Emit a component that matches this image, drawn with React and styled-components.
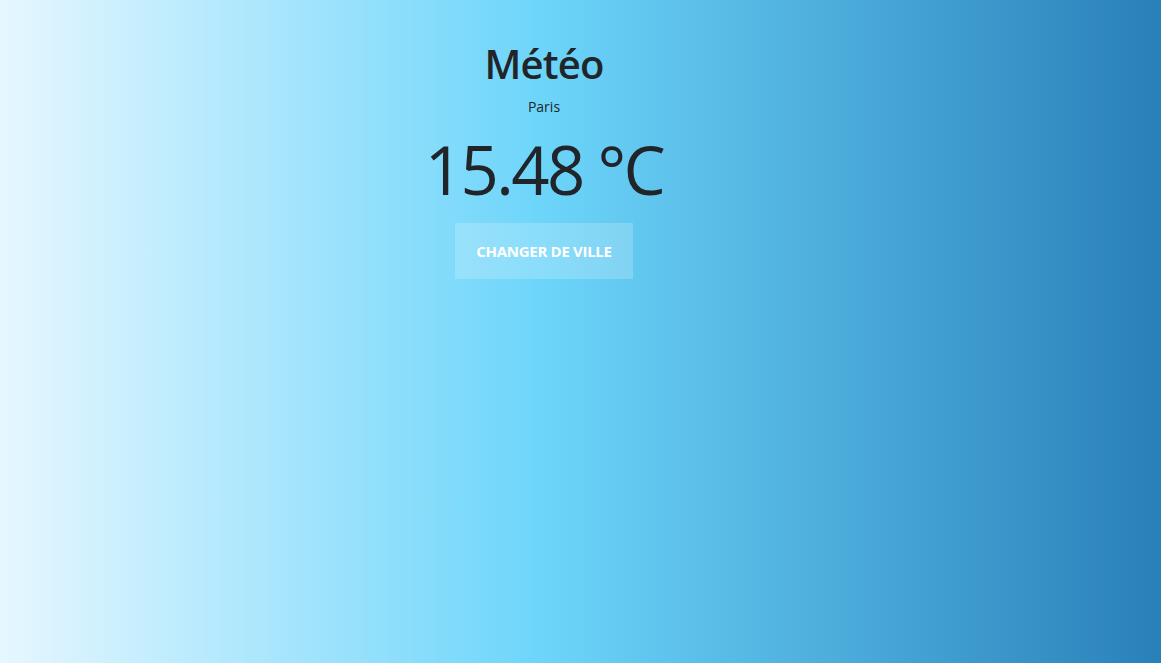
import React from 'react';
import styled, { createGlobalStyle } from 'styled-components';

const GlobalStyle = createGlobalStyle`
  * { box-sizing: border-box; }
  html, body { margin: 0; padding: 0; height: 100%; }
  body {
    font-family: "Open Sans", "Noto Sans", "Liberation Sans", sans-serif;
    color: #212529;
  }
`;

const Page = styled.div`
  min-height: 100vh;
  background: linear-gradient(to right, #e6f7ff 0%, #6dd5fa 46.5%, #2980b9 100%);
`;

const Container = styled.main`
  width: 1088px;
  display: flex;
  flex-direction: column;
  align-items: center;
  padding-top: 40px;
`;

const Title = styled.h1`
  margin: 0;
  font-size: 40px;
  font-weight: 600;
  line-height: 1.2;
  letter-spacing: -0.8px;
`;

const City = styled.p`
  margin: 8px 0 0;
  font-size: 14px;
  line-height: 1.5;
`;

const Temperature = styled.div`
  margin-top: 12px;
  font-size: 67px;
  font-weight: 400;
  line-height: 1.2;
  letter-spacing: -2.6px;
`;

const Button = styled.button`
  margin-top: 14px;
  width: 178px;
  height: 56px;
  border: none;
  background: rgba(255, 255, 255, 0.2);
  color: #fff;
  font-family: inherit;
  font-size: 15px;
  font-weight: 700;
  text-transform: uppercase;
  cursor: pointer;
  letter-spacing: -0.3px;
`;

export default function App() {
  return (
    <>
      <GlobalStyle />
      <Page>
        <Container>
          <Title>Météo</Title>
          <City>Paris</City>
          <Temperature>15.48 °C</Temperature>
          <Button>Changer de ville</Button>
        </Container>
      </Page>
    </>
  );
}
